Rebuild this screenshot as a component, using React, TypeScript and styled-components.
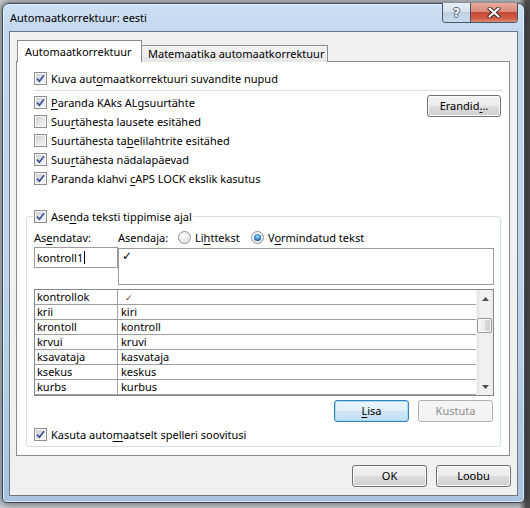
import React from "react";
import styled, { createGlobalStyle } from "styled-components";

const GlobalStyle = createGlobalStyle`
  * { box-sizing: border-box; }
  html, body { margin: 0; padding: 0; }
  body {
    width: 530px;
    height: 508px;
    overflow: hidden;
    background: linear-gradient(to right, #c9ced4 0, #c9ced4 519px, #505050 526px, #4a4a4a 100%);
    font-family: "Noto Sans", sans-serif;
    font-size: 11px;
    color: #000;
  }
`;

const Desktop = styled.div`
  width: 530px;
  height: 508px;
  padding: 3px 5px 5px 2px;
`;

const Window = styled.div`
  width: 523px;
  height: 500px;
  border: 1px solid #3b4c60;
  border-radius: 7px 7px 5px 5px;
  background: linear-gradient(to bottom, #cfe0f3 0, #c2d7ee 28px, #bdd4eb 55%, #aac4df 100%);
  box-shadow: 0 0 7px 1px rgba(0, 0, 0, 0.55), inset 0 0 0 1px rgba(255, 255, 255, 0.55);
  display: flex;
  flex-direction: column;
  padding: 0 6px 6px 6px;
`;

const TitleBar = styled.div`
  height: 27px;
  flex: none;
  display: flex;
  align-items: flex-start;
`;

const Title = styled.div`
  margin-top: 6px;
  padding-left: 1px;
  font-size: 11px;
  line-height: 15px;
  color: #000;
`;

const CaptionGroup = styled.div`
  margin-left: auto;
  margin-top: -1px;
  display: flex;
  height: 20px;
  border: 1px solid #44566b;
  border-top: none;
  border-radius: 0 0 4px 4px;
  overflow: hidden;
`;

const HelpButton = styled.div`
  width: 28px;
  height: 100%;
  border-right: 1px solid #44566b;
  background: linear-gradient(#e8eff7 0%, #d6e1ee 45%, #bfd0e3 50%, #cadaeb 100%);
  display: flex;
  align-items: center;
  justify-content: center;
  font-family: "DejaVu Sans", sans-serif;
  font-weight: bold;
  font-size: 12px;
  color: #ffffff;
  text-shadow: 1px 0 #4d5f73, -1px 0 #4d5f73, 0 1px #4d5f73, 0 -1px #4d5f73;
`;

const CloseButton = styled.div`
  width: 46px;
  height: 100%;
  background: linear-gradient(#eaab9d 0%, #dc8a78 45%, #c64a35 50%, #cf5a45 80%, #e08a70 100%);
  display: flex;
  align-items: center;
  justify-content: center;
`;

const Client = styled.div`
  flex: 1;
  border: 1px solid #6f7782;
  background: #f0f0f0;
  padding: 8px 6px 0 6px;
  display: flex;
  flex-direction: column;
`;

const TabRow = styled.div`
  display: flex;
  align-items: flex-end;
  height: 22px;
  margin-left: 1px;
  margin-bottom: -1px;
  position: relative;
  z-index: 1;
`;

const Tab = styled.div<{ $active?: boolean }>`
  height: ${(p) => (p.$active ? "22px" : "17px")};
  width: ${(p) => (p.$active ? "125px" : "187px")};
  border: 1px solid #898c95;
  border-bottom: none;
  margin-left: ${(p) => (p.$active ? "0" : "-1px")};
  padding: ${(p) => (p.$active ? "3px 0 0 7px" : "0 0 0 6px")};
  line-height: 15px;
  background: ${(p) => (p.$active ? "#ffffff" : "linear-gradient(#f3f3f3, #e6e6e6)")};
  position: relative;
  z-index: ${(p) => (p.$active ? 2 : 1)};
  white-space: nowrap;
`;

const Panel = styled.div`
  width: 494px;
  height: 395px;
  border: 1px solid #898c95;
  background: #ffffff;
  padding: 7px 8px 0 17px;
  display: flex;
  flex-direction: column;
`;

const CheckRow = styled.div`
  display: flex;
  align-items: center;
  height: 19px;
  gap: 4px;
  white-space: nowrap;
`;

const Box = styled.span`
  flex: none;
  width: 13px;
  height: 13px;
  border: 1px solid #8e8f8f;
  background: linear-gradient(135deg, #c8cbd0 0%, #e4e5e7 50%, #f8f8f8 100%);
  box-shadow: inset 0 0 0 1px #f6f6f6;
  display: flex;
  align-items: center;
  justify-content: center;
`;

const U = styled.span`
  text-decoration: underline;
  text-underline-offset: 2px;
  text-decoration-thickness: 1px;
`;

const Separator = styled.div`
  height: 1px;
  background: #d5dfe5;
  margin: 2px -2px 2px 0;
`;

const Section = styled.div`
  display: flex;
  align-items: flex-start;
`;

const Column = styled.div`
  flex: 1;
  display: flex;
  flex-direction: column;
`;

const Btn = styled.button<{ $variant?: "focus" | "disabled" }>`
  flex: none;
  width: 75px;
  height: 22px;
  padding: 0;
  font: inherit;
  line-height: 18px;
  color: ${(p) => (p.$variant === "disabled" ? "#8d8d8d" : "#000")};
  border: 1px solid
    ${(p) => (p.$variant === "focus" ? "#3c7fb1" : p.$variant === "disabled" ? "#adb2b5" : "#707070")};
  border-radius: 3px;
  background: ${(p) =>
    p.$variant === "disabled"
      ? "#f4f4f4"
      : p.$variant === "focus"
      ? "linear-gradient(#eaf6fd 0%, #e0f0fb 49%, #cfe6f7 50%, #c2dff4 100%)"
      : "linear-gradient(#f2f2f2 0%, #ebebeb 49%, #dddddd 50%, #cfcfcf 100%)"};
  box-shadow: inset 0 0 0 1px
    ${(p) => (p.$variant === "focus" ? "#9fdcf8" : p.$variant === "disabled" ? "#f4f4f4" : "#fbfbfb")};
`;

const ErandidBtn = styled(Btn)`
  width: 74px;
  margin-top: 2px;
`;

const Group = styled.fieldset`
  margin: 19px 0 0 -8px;
  padding: 0 6px 2px 7px;
  border: 1px solid #d5dfe5;
  border-radius: 3px;
  min-width: 0;
`;

const Legend = styled.legend`
  padding: 0 1px 0 1px;
  margin-left: -1px;
  height: 18px;
`;

const LegendRow = styled(CheckRow)`
  height: 18px;
`;

const LabelRow = styled.div`
  display: flex;
  align-items: center;
  height: 18px;
  margin-top: 3px;
  white-space: nowrap;
`;

const FieldLabel = styled.span<{ $w: number }>`
  width: ${(p) => p.$w}px;
  flex: none;
`;

const RadioOption = styled.span<{ $w?: number }>`
  display: flex;
  align-items: center;
  gap: 4px;
  flex: none;
  width: ${(p) => (p.$w ? `${p.$w}px` : "auto")};
`;

const Radio = styled.span<{ $on?: boolean }>`
  flex: none;
  width: 13px;
  height: 13px;
  border-radius: 50%;
  border: 1px solid #8e8f8f;
  background: radial-gradient(circle at 35% 35%, #ffffff 0, #ececec 45%, #c9c9c9 100%);
  box-shadow: inset 0 0 0 1px #f6f6f6;
  display: flex;
  align-items: center;
  justify-content: center;
  &::after {
    content: "";
    display: ${(p) => (p.$on ? "block" : "none")};
    width: 7px;
    height: 7px;
    border-radius: 50%;
    background: radial-gradient(circle at 50% 40%, #b2e8ff 0, #4ba4e2 35%, #1b4f86 75%, #12355e 100%);
  }
`;

const InputRow = styled.div`
  display: flex;
  align-items: flex-start;
  margin-top: 1px;
`;

const TextInput = styled.div`
  width: 84px;
  height: 21px;
  border: 1px solid #9c9c9c;
  background: #fff;
  padding-left: 2px;
  line-height: 19px;
  display: flex;
  align-items: center;
`;

const Caret = styled.span`
  width: 1px;
  height: 13px;
  background: #000;
  margin-left: 1px;
`;

const ReplaceBox = styled.div`
  width: 376px;
  height: 37px;
  margin-top: 1px;
  border: 1px solid #9c9c9c;
  background: #fff;
  padding: 0 0 0 3px;
  font-family: "DejaVu Sans", sans-serif;
  font-size: 12px;
  line-height: 15px;
`;

const ListBox = styled.div`
  width: 460px;
  height: 107px;
  margin-top: 4px;
  border: 1px solid #828790;
  display: flex;
  background: #fff;
`;

const ListRows = styled.div`
  flex: 1;
  display: flex;
  flex-direction: column;
`;

const ListRow = styled.div`
  display: grid;
  grid-template-columns: 83px 1fr;
  height: 15px;
  border-bottom: 1px solid #a0a0a0;
  line-height: 14px;
  white-space: nowrap;
`;

const Cell = styled.span<{ $first?: boolean }>`
  padding-left: ${(p) => (p.$first ? "2px" : "3px")};
  border-right: ${(p) => (p.$first ? "1px solid #a0a0a0" : "none")};
  overflow: hidden;
`;

const TickMark = styled.span`
  font-family: "DejaVu Sans", sans-serif;
  font-size: 9px;
  font-weight: bold;
  color: #7a3a12;
  margin-left: 4px;
`;

const ScrollBar = styled.div`
  width: 17px;
  flex: none;
  display: flex;
  flex-direction: column;
  background: linear-gradient(to right, #e4e4e4 0, #f1f1f1 25%, #f1f1f1 75%, #e9e9e9 100%);
  border-left: 1px solid #f4f4f4;
`;

const ScrollArrow = styled.div`
  height: 17px;
  flex: none;
  display: flex;
  align-items: center;
  justify-content: center;
`;

const ScrollTrack = styled.div`
  flex: 1;
  padding-top: 11px;
`;

const Thumb = styled.div`
  height: 15px;
  margin: 0 1px 0 0;
  border: 1px solid #979797;
  border-radius: 2px;
  background: linear-gradient(to right, #f6f6f6 0%, #ebebeb 50%, #dadada 51%, #cdcdcd 100%);
  box-shadow: inset 0 0 0 1px #f9f9f9;
`;

const ButtonRow = styled.div`
  display: flex;
  justify-content: flex-end;
  gap: 9px;
  margin-top: 4px;
  padding-right: 1px;
`;

const BottomCheck = styled(CheckRow)`
  margin-top: 3px;
`;

const Footer = styled.div`
  display: flex;
  justify-content: flex-end;
  gap: 9px;
  margin-top: 9px;
`;

const CheckMark = () => (
  <svg width="9" height="9" viewBox="0 0 9 9">
    <path d="M1 4.6 L3.4 7.2 L8 1.3" fill="none" stroke="#3d5296" strokeWidth="1.7" />
  </svg>
);

const Checkbox = ({ checked }: { checked?: boolean }) => <Box>{checked && <CheckMark />}</Box>;

const rows: [string, React.ReactNode][] = [
  ["kontrollok", <TickMark key="t">✓</TickMark>],
  ["krii", "kiri"],
  ["krontoll", "kontroll"],
  ["krvui", "kruvi"],
  ["ksavataja", "kasvataja"],
  ["ksekus", "keskus"],
  ["kurbs", "kurbus"],
];

export default function App() {
  return (
    <>
      <GlobalStyle />
      <Desktop>
        <Window>
          <TitleBar>
            <Title>Automaatkorrektuur: eesti</Title>
            <CaptionGroup>
              <HelpButton>?</HelpButton>
              <CloseButton>
                <svg width="14" height="11" viewBox="0 0 14 11">
                  <path d="M2.5 1.5 L11.5 9.5 M11.5 1.5 L2.5 9.5" stroke="#3a2622" strokeWidth="4" strokeLinecap="round" />
                  <path d="M2.5 1.5 L11.5 9.5 M11.5 1.5 L2.5 9.5" stroke="#ffffff" strokeWidth="2.2" strokeLinecap="round" />
                </svg>
              </CloseButton>
            </CaptionGroup>
          </TitleBar>
          <Client>
            <TabRow>
              <Tab $active>Automaatkorrektuur</Tab>
              <Tab>Matemaatika automaatkorrektuur</Tab>
            </TabRow>
            <Panel>
              <CheckRow>
                <Checkbox checked />
                <span>
                  Kuva aut<U>o</U>maatkorrektuuri suvandite nupud
                </span>
              </CheckRow>
              <Separator />
              <Section>
                <Column>
                  <CheckRow>
                    <Checkbox checked />
                    <span>
                      <U>P</U>aranda KAks ALgsuurtähte
                    </span>
                  </CheckRow>
                  <CheckRow>
                    <Checkbox />
                    <span>
                      Suu<U>r</U>tähesta lausete esitähed
                    </span>
                  </CheckRow>
                  <CheckRow>
                    <Checkbox />
                    <span>
                      Suurtähesta ta<U>b</U>elilahtrite esitähed
                    </span>
                  </CheckRow>
                  <CheckRow>
                    <Checkbox checked />
                    <span>
                      Suu<U>r</U>tähesta nädalapäevad
                    </span>
                  </CheckRow>
                  <CheckRow>
                    <Checkbox checked />
                    <span>
                      Paranda klahvi <U>c</U>APS LOCK ekslik kasutus
                    </span>
                  </CheckRow>
                </Column>
                <ErandidBtn>
                  Erandid<U>.</U>..
                </ErandidBtn>
              </Section>
              <Group>
                <Legend>
                  <LegendRow>
                    <Checkbox checked />
                    <span>
                      Ase<U>n</U>da teksti tippimise ajal
                    </span>
                  </LegendRow>
                </Legend>
                <LabelRow>
                  <FieldLabel $w={84}>
                    As<U>e</U>ndatav:
                  </FieldLabel>
                  <FieldLabel $w={60}>
                    Asenda<U>j</U>a:
                  </FieldLabel>
                  <RadioOption $w={73}>
                    <Radio />
                    <span>
                      Li<U>h</U>ttekst
                    </span>
                  </RadioOption>
                  <RadioOption>
                    <Radio $on />
                    <span>
                      V<U>o</U>rmindatud tekst
                    </span>
                  </RadioOption>
                </LabelRow>
                <InputRow>
                  <TextInput>
                    kontroll1
                    <Caret />
                  </TextInput>
                  <ReplaceBox>✓</ReplaceBox>
                </InputRow>
                <ListBox>
                  <ListRows>
                    {rows.map(([a, b]) => (
                      <ListRow key={a}>
                        <Cell $first>{a}</Cell>
                        <Cell>{b}</Cell>
                      </ListRow>
                    ))}
                  </ListRows>
                  <ScrollBar>
                    <ScrollArrow>
                      <svg width="7" height="4" viewBox="0 0 7 4">
                        <polygon points="3.5,0 7,4 0,4" fill="#4f4f4f" />
                      </svg>
                    </ScrollArrow>
                    <ScrollTrack>
                      <Thumb />
                    </ScrollTrack>
                    <ScrollArrow>
                      <svg width="7" height="4" viewBox="0 0 7 4">
                        <polygon points="0,0 7,0 3.5,4" fill="#4f4f4f" />
                      </svg>
                    </ScrollArrow>
                  </ScrollBar>
                </ListBox>
                <ButtonRow>
                  <Btn $variant="focus">
                    <U>L</U>isa
                  </Btn>
                  <Btn $variant="disabled">Kustuta</Btn>
                </ButtonRow>
                <BottomCheck>
                  <Checkbox checked />
                  <span>
                    Kasuta auto<U>m</U>aatselt spelleri soovitusi
                  </span>
                </BottomCheck>
              </Group>
            </Panel>
            <Footer>
              <Btn>OK</Btn>
              <Btn>Loobu</Btn>
            </Footer>
          </Client>
        </Window>
      </Desktop>
    </>
  );
}
